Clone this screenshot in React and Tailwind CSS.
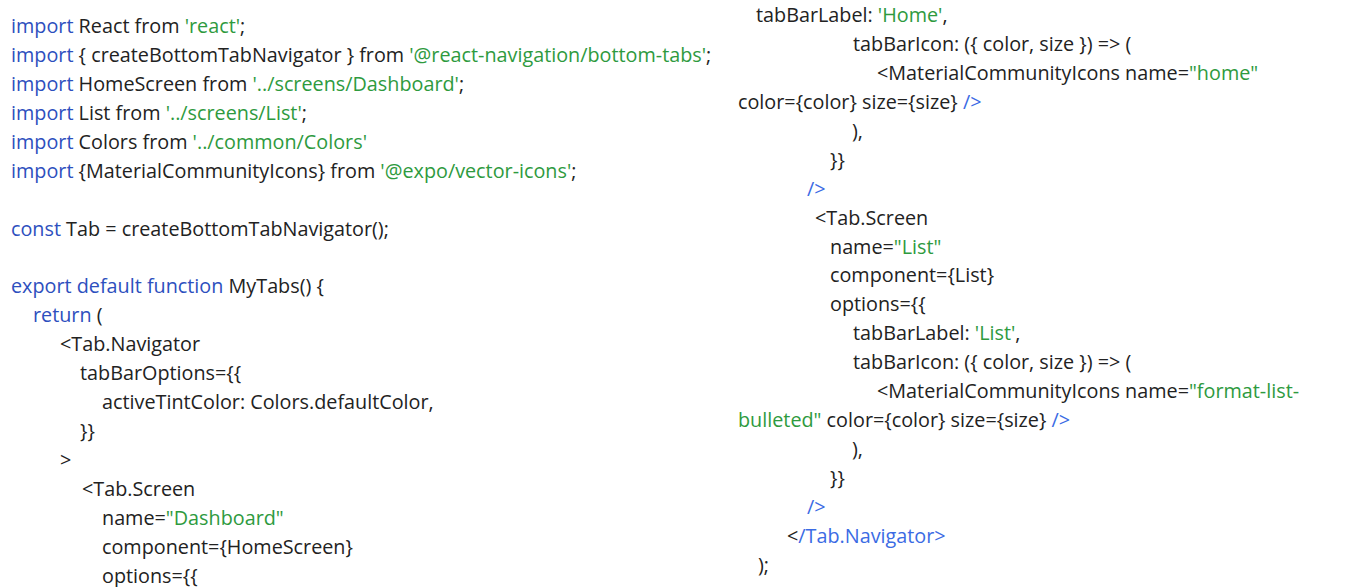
import React from 'react'

const KW = 'text-[#2d4fbe]'
const TAG = 'text-[#3b6be4]'
const STR = 'text-[#2e9a3e]'

const Line = ({ className = '', children }) => (
  <div className={`h-[28.95px] leading-[28.95px] whitespace-pre ${className}`}>{children}</div>
)

const K = ({ children }) => <span className={KW}>{children}</span>
const T = ({ children }) => <span className={TAG}>{children}</span>
const S = ({ children }) => <span className={STR}>{children}</span>

export default function App() {
  return (
    <div className="w-[1346px] h-[587px] bg-white overflow-hidden flex text-[19.8px] text-[#222222] font-['Open_Sans',sans-serif]">
      {/* left column */}
      <div className="w-[738px] shrink-0 pl-[11px] pt-[12px]">
        <Line><K>import</K> React from <S>'react'</S>;</Line>
        <Line><K>import</K> {'{'} createBottomTabNavigator {'}'} from <S>'@react-navigation/bottom-tabs'</S>;</Line>
        <Line><K>import</K> HomeScreen from <S>'../screens/Dashboard'</S>;</Line>
        <Line><K>import</K> List from <S>'../screens/List'</S>;</Line>
        <Line><K>import</K> Colors from <S>'../common/Colors'</S></Line>
        <Line><K>import</K> {'{MaterialCommunityIcons}'} from <S>'@expo/vector-icons'</S>;</Line>
        <Line> </Line>
        <Line><K>const</K> Tab = createBottomTabNavigator();</Line>
        <Line> </Line>
        <Line><K>export default function</K> MyTabs() {'{'}</Line>
        <Line className="pl-[22px]"><K>return</K> (</Line>
        <Line className="pl-[49px]">{'<Tab.Navigator'}</Line>
        <Line className="pl-[69px]">{'tabBarOptions={{'}</Line>
        <Line className="pl-[91px]">activeTintColor: Colors.defaultColor,</Line>
        <Line className="pl-[69px]">{'}}'}</Line>
        <Line className="pl-[49px]">{'>'}</Line>
        <Line className="pl-[71px]">{'<Tab.Screen'}</Line>
        <Line className="pl-[91px]">name=<S>"Dashboard"</S></Line>
        <Line className="pl-[91px]">{'component={HomeScreen}'}</Line>
        <Line className="pl-[91px]">{'options={{'}</Line>
      </div>

      {/* right column */}
      <div className="flex-1 pt-[1px]">
        <Line className="pl-[18px]">tabBarLabel: <S>'Home'</S>,</Line>
        <Line className="pl-[115px]">{'tabBarIcon: ({ color, size }) => ('}</Line>
        <Line className="pl-[139px]">{'<MaterialCommunityIcons name='}<S>"home"</S></Line>
        <Line>{'color={color} size={size} '}<T>{'/>'}</T></Line>
        <Line className="pl-[114px]">),</Line>
        <Line className="pl-[92px]">{'}}'}</Line>
        <Line className="pl-[69px]"><T>{'/>'}</T></Line>
        <Line className="pl-[77px]">{'<Tab.Screen'}</Line>
        <Line className="pl-[92px]">name=<S>"List"</S></Line>
        <Line className="pl-[92px]">{'component={List}'}</Line>
        <Line className="pl-[92px]">{'options={{'}</Line>
        <Line className="pl-[115px]">tabBarLabel: <S>'List'</S>,</Line>
        <Line className="pl-[115px]">{'tabBarIcon: ({ color, size }) => ('}</Line>
        <Line className="pl-[139px]">{'<MaterialCommunityIcons name='}<S>"format-list-</S></Line>
        <Line><S>bulleted"</S>{' color={color} size={size} '}<T>{'/>'}</T></Line>
        <Line className="pl-[114px]">),</Line>
        <Line className="pl-[92px]">{'}}'}</Line>
        <Line className="pl-[69px]"><T>{'/>'}</T></Line>
        <Line className="pl-[49px]">{'<'}<T>{'/Tab.Navigator>'}</T></Line>
        <Line className="pl-[20px]">);</Line>
      </div>
    </div>
  )
}
